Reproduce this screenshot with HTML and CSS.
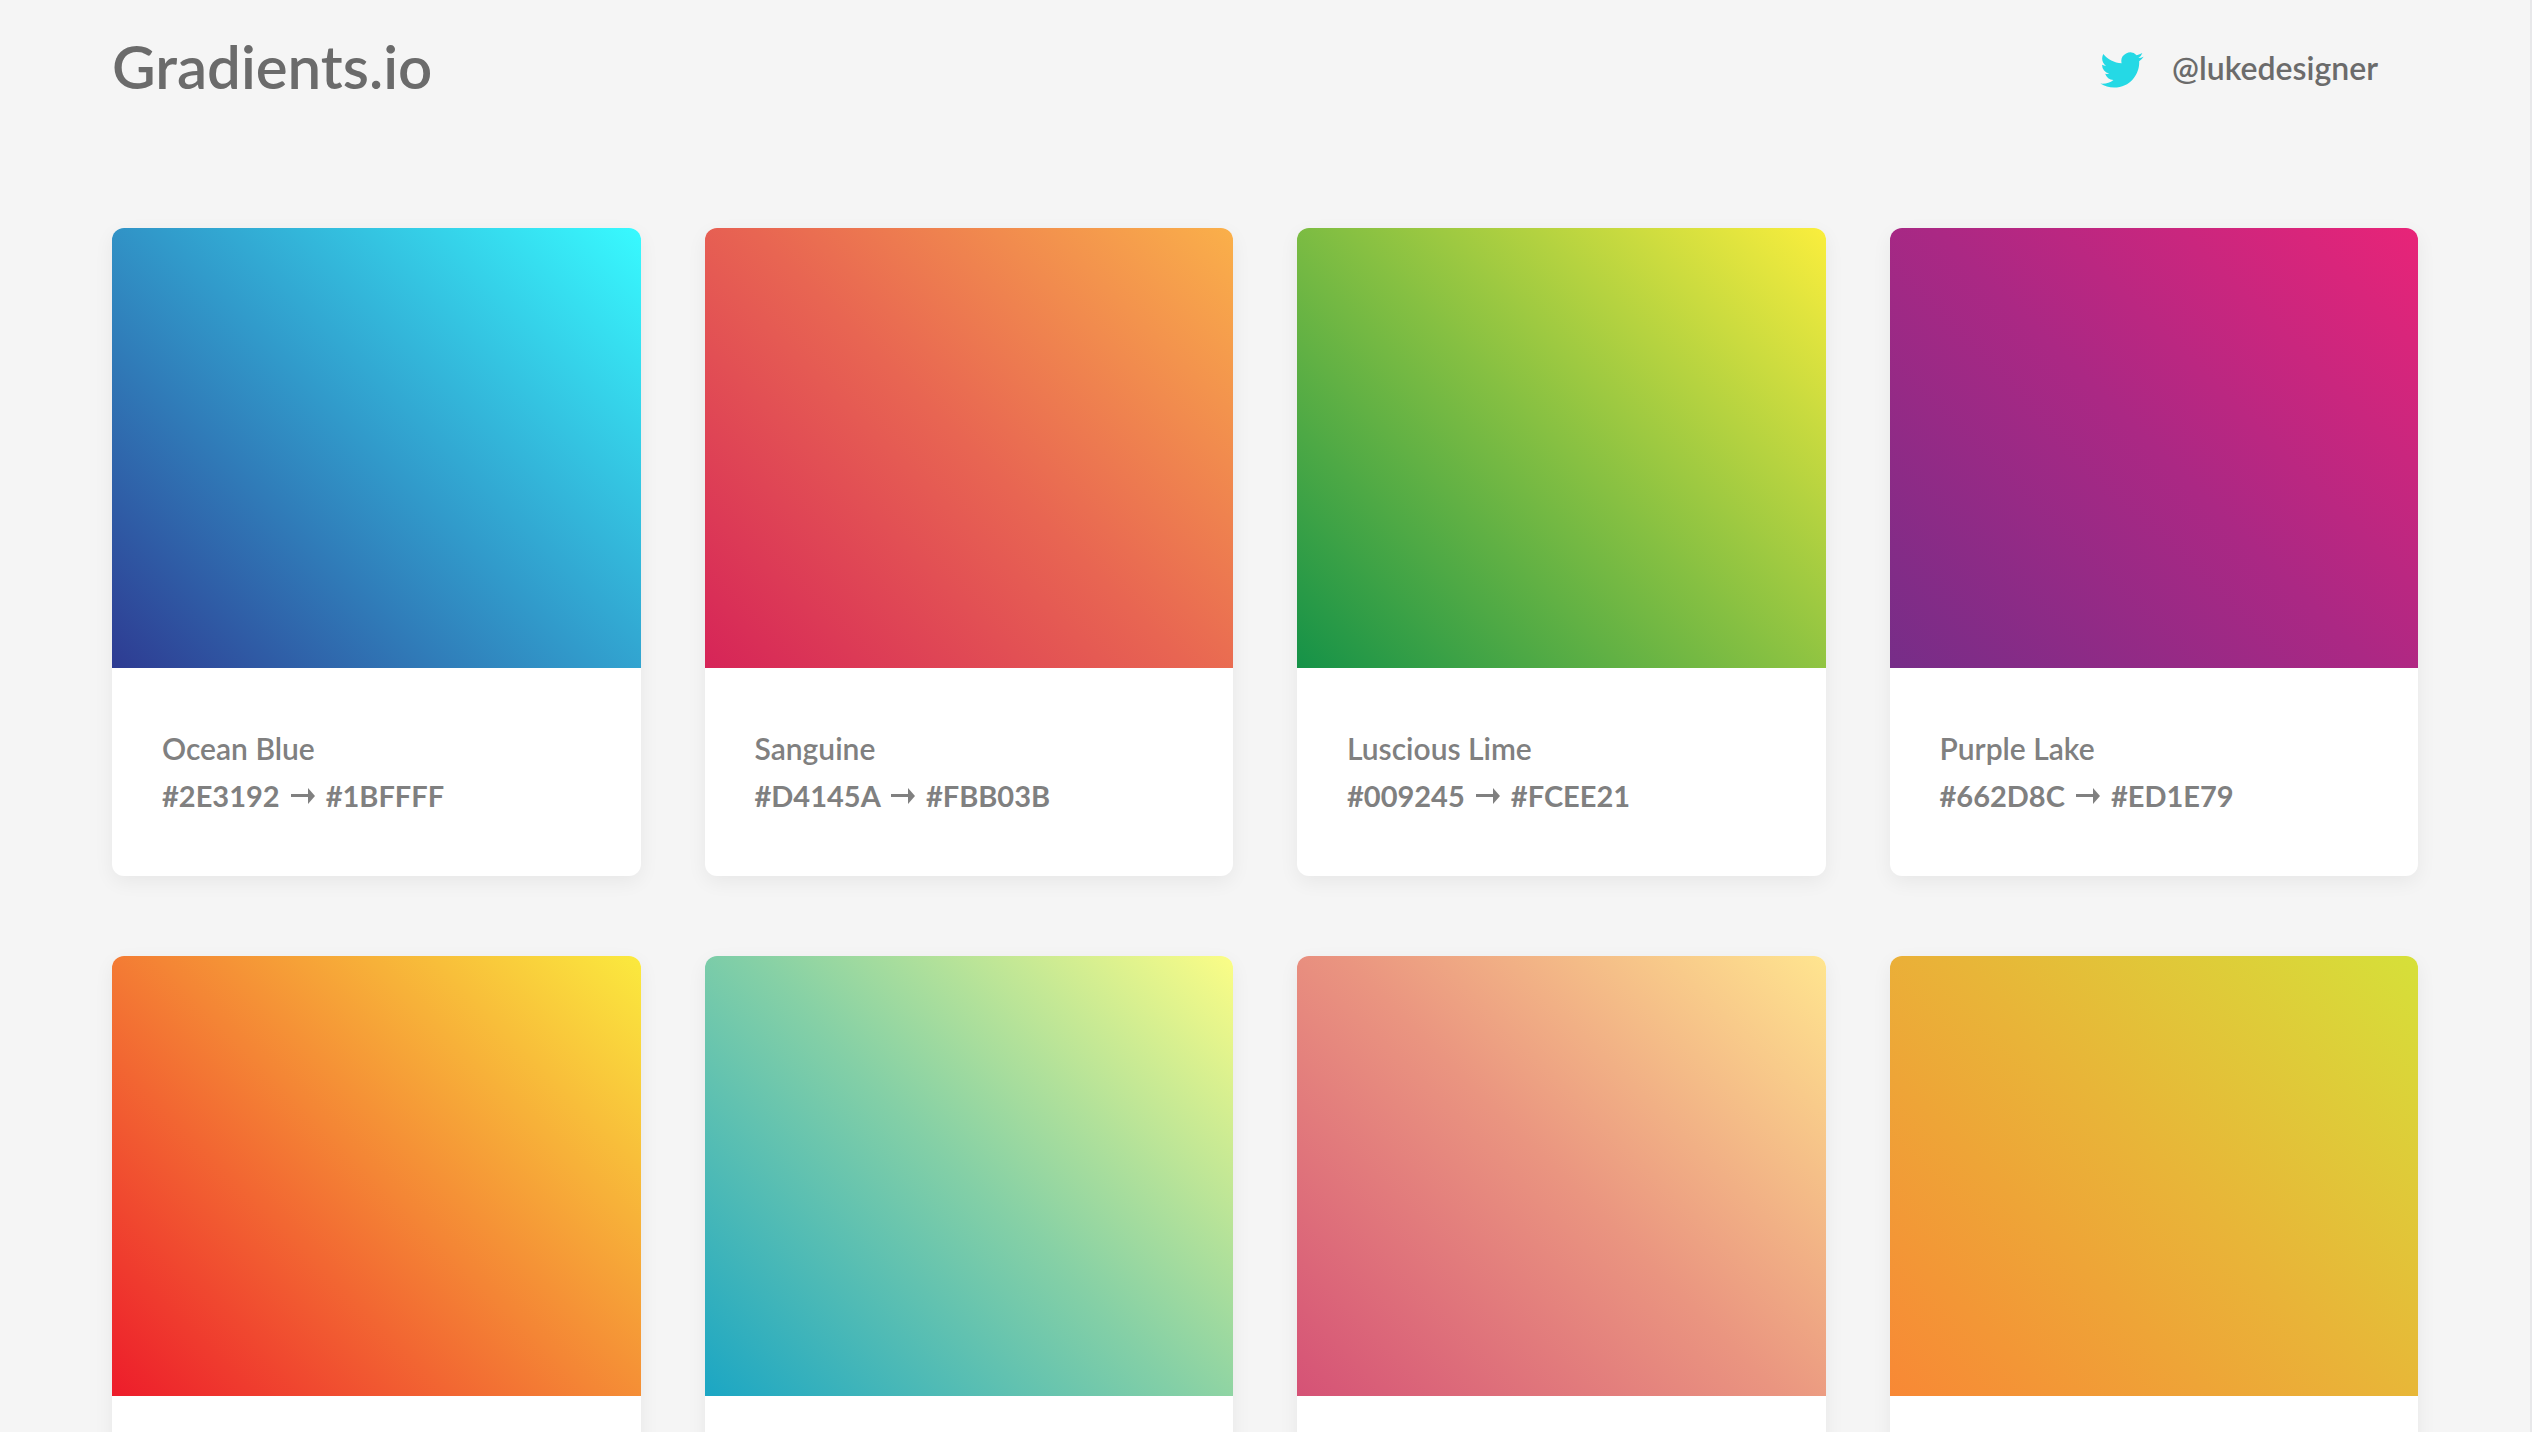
FILE: index.html
```html
<!DOCTYPE html>
<html lang="en">
<head>
<meta charset="utf-8">
<meta name="viewport" content="width=device-width, initial-scale=1">
<title>Gradients.io</title>
<link rel="stylesheet" href="styles.css">
</head>
<body>
<div class="page">
  <header class="header">
    <h1 class="logo">Gradients.io</h1>
    <a class="author" href="#">
      <svg class="author-icon" viewBox="0 0 24 20" aria-hidden="true"><path fill="currentColor" d="M23.95 2.57a10 10 0 0 1-2.82.77 4.96 4.96 0 0 0 2.16-2.72c-.95.55-2 .96-3.13 1.19a4.92 4.92 0 0 0-8.38 4.48C7.69 6.1 4.07 4.13 1.64 1.16a4.82 4.82 0 0 0-.67 2.48c0 1.7.87 3.21 2.19 4.1a4.9 4.9 0 0 1-2.23-.62v.06a4.92 4.92 0 0 0 3.95 4.83 5 5 0 0 1-2.21.08 4.94 4.94 0 0 0 4.6 3.42A9.87 9.87 0 0 1 0 17.54a14 14 0 0 0 7.56 2.21c9.05 0 14-7.5 14-13.98 0-.21 0-.42-.02-.63a9.94 9.94 0 0 0 2.46-2.55z"/></svg>
      <span>@lukedesigner</span>
    </a>
  </header>
  <main class="grid">
    <article class="card">
      <div class="swatch ocean-blue"></div>
      <div class="info"><h2 class="name">Ocean Blue</h2><p class="codes">#2E3192 <svg class="arrow" viewBox="0 0 24 16" aria-hidden="true"><path fill="currentColor" d="M0 6h17V0l7 8-7 8V9H0z"/></svg> #1BFFFF</p></div>
    </article>
    <article class="card">
      <div class="swatch sanguine"></div>
      <div class="info"><h2 class="name">Sanguine</h2><p class="codes">#D4145A <svg class="arrow" viewBox="0 0 24 16" aria-hidden="true"><path fill="currentColor" d="M0 6h17V0l7 8-7 8V9H0z"/></svg> #FBB03B</p></div>
    </article>
    <article class="card">
      <div class="swatch luscious-lime"></div>
      <div class="info"><h2 class="name">Luscious Lime</h2><p class="codes">#009245 <svg class="arrow" viewBox="0 0 24 16" aria-hidden="true"><path fill="currentColor" d="M0 6h17V0l7 8-7 8V9H0z"/></svg> #FCEE21</p></div>
    </article>
    <article class="card">
      <div class="swatch purple-lake"></div>
      <div class="info"><h2 class="name">Purple Lake</h2><p class="codes">#662D8C <svg class="arrow" viewBox="0 0 24 16" aria-hidden="true"><path fill="currentColor" d="M0 6h17V0l7 8-7 8V9H0z"/></svg> #ED1E79</p></div>
    </article>
    <article class="card"><div class="swatch red-yellow"></div><div class="info"></div></article>
    <article class="card"><div class="swatch teal-yellow"></div><div class="info"></div></article>
    <article class="card"><div class="swatch pink-cream"></div><div class="info"></div></article>
    <article class="card"><div class="swatch orange-lime"></div><div class="info"></div></article>
  </main>
</div>
</body>
</html>
```
FILE: styles.css
```css
* { box-sizing: border-box; }

body {
  margin: 0;
  background: #f5f5f5;
  color: #6b6b6b;
  font-family: Lato, "Liberation Sans", sans-serif;
}

.page {
  height: 100vh;
  overflow: hidden;
  padding: 0 112px;
  border-right: 2px solid #e8e8ea;
}

.header {
  display: flex;
  align-items: center;
  justify-content: space-between;
  height: 132px;
  margin-bottom: 96px;
  padding-right: 40px;
}

.logo {
  margin: 0;
  font-size: 60px;
  font-weight: 600;
  line-height: 72px;
}

.author {
  display: flex;
  align-items: flex-end;
  gap: 28px;
  padding-top: 4px;
  color: inherit;
  font-size: 32px;
  font-weight: 600;
  line-height: 40px;
  text-decoration: none;
}

.author-icon {
  width: 44px;
  height: 36px;
  color: #25d9e5;
}

.grid {
  display: grid;
  grid-template-columns: repeat(4, 1fr);
  gap: 80px 64px;
}

.card {
  overflow: hidden;
  border-radius: 12px;
  background: #fff;
  box-shadow: 0 6px 20px rgba(0, 0, 0, 0.06);
}

.swatch { height: 440px; }

.info {
  min-height: 208px;
  padding: 56px 50px;
  color: #808080;
  line-height: 48px;
}

.name,
.codes { margin: 0; }

.name {
  font-size: 30px;
  font-weight: 600;
}

.codes {
  font-size: 29px;
  font-weight: 700;
}

.arrow {
  width: 24px;
  height: 16px;
  margin: 0 4px;
  vertical-align: 3px;
}

.ocean-blue { background: linear-gradient(45deg, #2e3b92, #319bcb 50%, #38faff); }
.sanguine { background: linear-gradient(45deg, #d62458, #e86552 50%, #fab04a); }
.luscious-lime { background: linear-gradient(45deg, #159248, #86c042 50%, #faee3d); }
.purple-lake { background: linear-gradient(45deg, #762d88, #ab2884 50%, #e82478); }
.red-yellow { background: linear-gradient(45deg, #ed1c2b, #f48535 50%, #fbea3e); }
.teal-yellow { background: linear-gradient(45deg, #1ba6c4, #85d0a6 50%, #fbfd86); }
.pink-cream { background: linear-gradient(45deg, #d55276, #ea9580 50%, #ffe58f); }
.orange-lime { background: linear-gradient(45deg, #f88835, #e9b338 50%, #d6e039); }
```
